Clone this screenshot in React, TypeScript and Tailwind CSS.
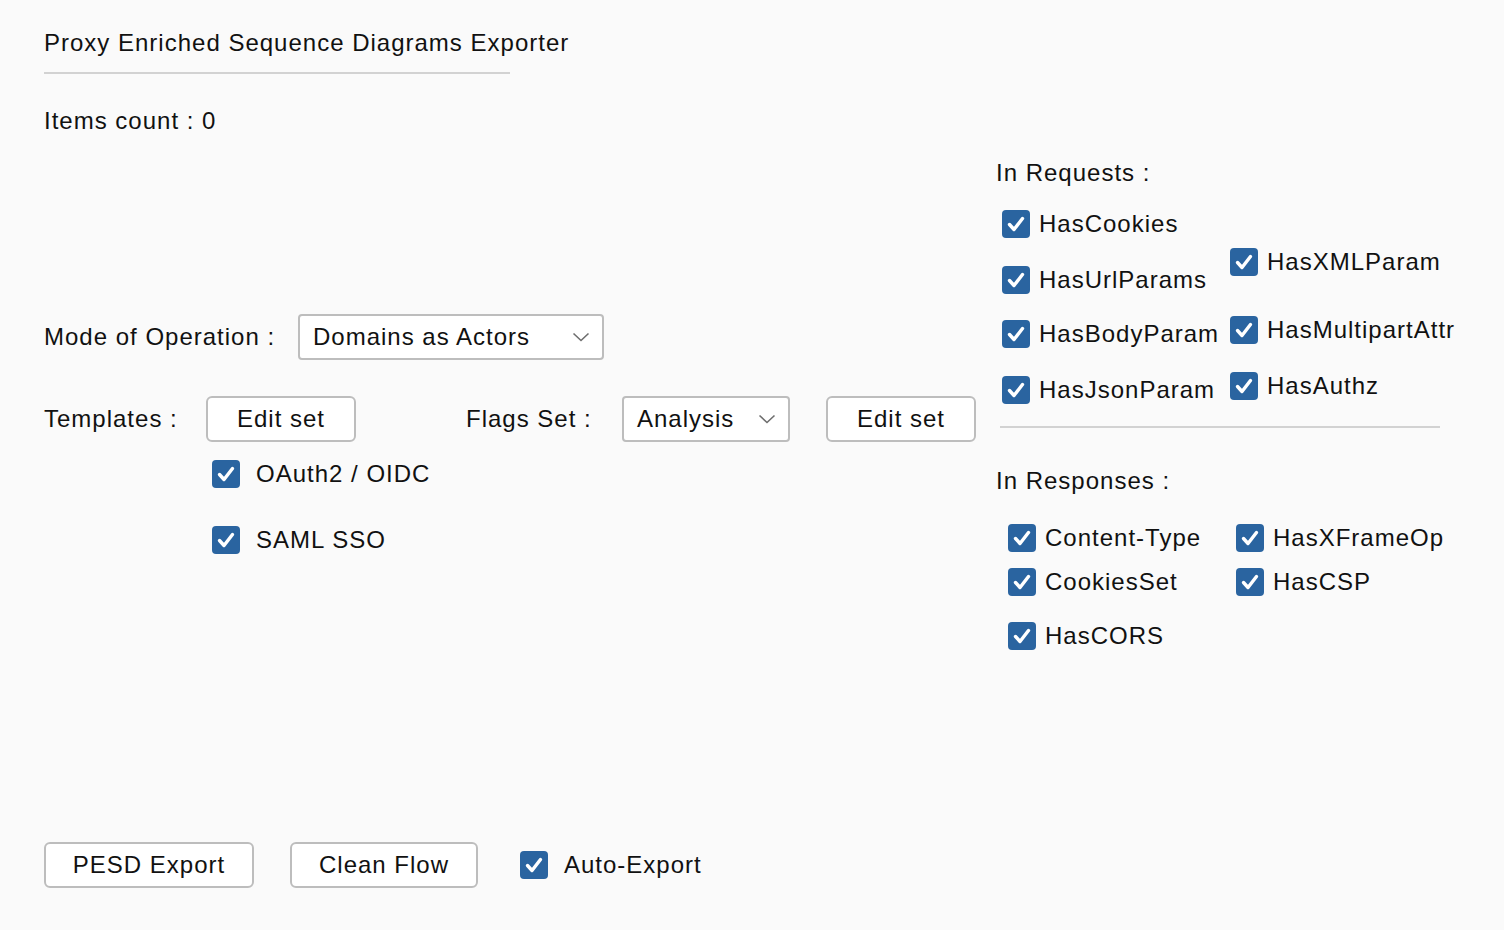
import React from "react";

const Check = ({ gap = 16, label, className = "" }: { gap?: number; label: string; className?: string }) => (
  <div className={`flex items-center h-[28px] ${className}`}>
    <div className="w-[28px] h-[28px] rounded-[4px] bg-[#2a64a0] flex items-center justify-center shrink-0">
      <svg width="28" height="28" viewBox="0 0 28 28">
        <path d="M7.5 14.5 L12 19.5 L20.5 8.5" fill="none" stroke="#ffffff" strokeWidth="3.4" strokeLinecap="round" strokeLinejoin="round" />
      </svg>
    </div>
    <span className={`whitespace-nowrap ${gap === 16 ? "ml-[16px]" : "ml-[9px]"}`}>{label}</span>
  </div>
);

const Button = ({ label, w }: { label: string; w: string }) => (
  <div className={`${w} h-[46px] rounded-[6px] border-2 border-[#bdbdbd] bg-white flex items-center justify-center`}>
    {label}
  </div>
);

const Chevron = () => (
  <svg width="18" height="10" viewBox="0 0 18 10">
    <path d="M1.5 1.5 L9 8.5 L16.5 1.5" fill="none" stroke="#6e6e6e" strokeWidth="1.6" />
  </svg>
);

const Select = ({ label, w }: { label: string; w: string }) => (
  <div className={`${w} h-[46px] rounded-[4px] border-2 border-[#bdbdbd] bg-white flex items-center justify-between pl-[13px] pr-[12px]`}>
    <span className="whitespace-nowrap">{label}</span>
    <Chevron />
  </div>
);

export default function App() {
  return (
    <div
      className="w-[1504px] h-[930px] bg-[#fafafa] text-[#111] text-[24px] leading-[30px] tracking-[1px] flex overflow-hidden"
      style={{ fontFamily: '"Liberation Sans", Arial, sans-serif' }}
    >
      {/* Left column */}
      <div className="w-[996px] pl-[44px] flex flex-col">
        <div className="mt-[28px] h-[30px] whitespace-nowrap">Proxy Enriched Sequence Diagrams Exporter</div>
        <div className="mt-[14px] w-[466px] h-[2px] bg-[#d2d2d2]" />
        <div className="mt-[32px] h-[30px]">Items count : 0</div>

        <div className="mt-[178px] h-[46px] flex items-center">
          <span className="w-[254px] whitespace-nowrap">Mode of Operation :</span>
          <Select label="Domains as Actors" w="w-[306px]" />
        </div>

        <div className="mt-[36px] h-[46px] flex items-center">
          <span className="w-[162px]">Templates :</span>
          <Button label="Edit set" w="w-[150px]" />
          <span className="ml-[110px] w-[156px]">Flags Set :</span>
          <Select label="Analysis" w="w-[168px]" />
          <div className="ml-[36px]">
            <Button label="Edit set" w="w-[150px]" />
          </div>
        </div>

        <Check label="OAuth2 / OIDC" className="ml-[168px] mt-[18px]" />
        <Check label="SAML SSO" className="ml-[168px] mt-[38px]" />

        <div className="mt-auto mb-[42px] flex items-center">
          <Button label="PESD Export" w="w-[210px]" />
          <div className="ml-[36px]">
            <Button label="Clean Flow" w="w-[188px]" />
          </div>
          <Check label="Auto-Export" className="ml-[42px]" />
        </div>
      </div>

      {/* Right column */}
      <div className="flex-1 flex flex-col">
        <div className="mt-[158px] h-[30px]">In Requests :</div>
        <div className="flex ml-[6px]">
          <div className="flex flex-col w-[228px]">
            <Check gap={9} label="HasCookies" className="mt-[22px]" />
            <Check gap={9} label="HasUrlParams" className="mt-[28px]" />
            <Check gap={9} label="HasBodyParam" className="mt-[26px]" />
            <Check gap={9} label="HasJsonParam" className="mt-[28px]" />
          </div>
          <div className="flex flex-col">
            <Check gap={9} label="HasXMLParam" className="mt-[60px]" />
            <Check gap={9} label="HasMultipartAttr" className="mt-[40px]" />
            <Check gap={9} label="HasAuthz" className="mt-[28px]" />
          </div>
        </div>
        <div className="mt-[22px] ml-[4px] w-[440px] h-[2px] bg-[#d2d2d2]" />
        <div className="mt-[38px] h-[30px]">In Responses :</div>
        <div className="flex ml-[12px]">
          <div className="flex flex-col w-[228px]">
            <Check gap={9} label="Content-Type" className="mt-[28px]" />
            <Check gap={9} label="CookiesSet" className="mt-[16px]" />
            <Check gap={9} label="HasCORS" className="mt-[26px]" />
          </div>
          <div className="flex flex-col">
            <Check gap={9} label="HasXFrameOp" className="mt-[28px]" />
            <Check gap={9} label="HasCSP" className="mt-[16px]" />
          </div>
        </div>
      </div>
    </div>
  );
}
